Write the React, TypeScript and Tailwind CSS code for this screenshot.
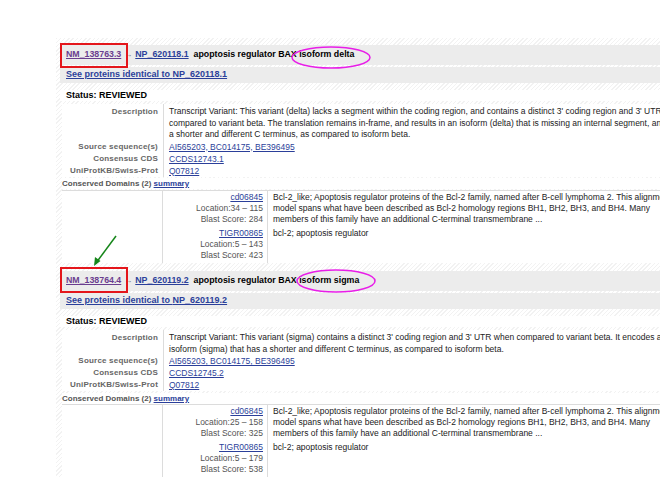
import React from 'react'

type Domain = { id: string; loc: string; score: string; text: string[] }
type Record = {
  nm: string
  np: string
  iso: string
  desc: string[]
  ccds: string
  domains: Domain[]
}

const records: Record[] = [
  {
    nm: 'NM_138763.3',
    np: 'NP_620118.1',
    iso: 'isoform delta',
    desc: [
      "Transcript Variant: This variant (delta) lacks a segment within the coding region, and contains a distinct 3' coding region and 3' UTR, when",
      'compared to variant beta. The translation remains in-frame, and results in an isoform (delta) that is missing an internal segment, and has',
      'a shorter and different C terminus, as compared to isoform beta.',
    ],
    ccds: 'CCDS12743.1',
    domains: [
      {
        id: 'cd06845',
        loc: '34 – 115',
        score: '284',
        text: [
          'Bcl-2_like; Apoptosis regulator proteins of the Bcl-2 family, named after B-cell lymphoma 2. This alignment',
          'model spans what have been described as Bcl-2 homology regions BH1, BH2, BH3, and BH4. Many',
          'members of this family have an additional C-terminal transmembrane ...',
        ],
      },
      { id: 'TIGR00865', loc: '5 – 143', score: '423', text: ['bcl-2; apoptosis regulator'] },
    ],
  },
  {
    nm: 'NM_138764.4',
    np: 'NP_620119.2',
    iso: 'isoform sigma',
    desc: [
      "Transcript Variant: This variant (sigma) contains a distinct 3' coding region and 3' UTR when compared to variant beta. It encodes an",
      'isoform (sigma) that has a shorter and different C terminus, as compared to isoform beta.',
    ],
    ccds: 'CCDS12745.2',
    domains: [
      {
        id: 'cd06845',
        loc: '25 – 158',
        score: '325',
        text: [
          'Bcl-2_like; Apoptosis regulator proteins of the Bcl-2 family, named after B-cell lymphoma 2. This alignment',
          'model spans what have been described as Bcl-2 homology regions BH1, BH2, BH3, and BH4. Many',
          'members of this family have an additional C-terminal transmembrane ...',
        ],
      },
      { id: 'TIGR00865', loc: '5 – 179', score: '538', text: ['bcl-2; apoptosis regulator'] },
    ],
  },
]

const link = 'text-[#2b3f9a] underline'

function Row({ label, children, tall }: { label: string; children: React.ReactNode; tall?: boolean }) {
  return (
    <>
      <div
        className={`text-right pr-[5px] font-bold text-[8px] text-[#666] tracking-[0.2px] ${tall ? 'pt-[2px] leading-[11.5px]' : 'leading-[12px]'}`}
      >
        {label}
      </div>
      <div className={`border-l border-[#dcdcdc] pl-[5px] ${tall ? 'pt-[2px] leading-[11.5px]' : 'leading-[12px]'}`}>
        {children}
      </div>
    </>
  )
}

function Block({ r, first }: { r: Record; first?: boolean }) {
  return (
    <div className={first ? 'pt-[7px]' : 'pt-[8.5px]'}>
      <div className="h-[20px] bg-[#ececec] flex items-center pl-[6px] text-[8.8px] font-bold whitespace-nowrap">
        <span className="text-[#6a3d8f] underline">{r.nm}</span>
        <span className="text-[#7a7a7a] font-normal text-[8px] mx-[3px]">→</span>
        <span className={link}>{r.np}</span>
        <span className="ml-[5px] text-black">apoptosis regulator BAX {r.iso}</span>
      </div>
      <div className="mt-[1.5px] h-[16px] bg-[#ececec] flex items-center pl-[6px] text-[9px] font-bold whitespace-nowrap">
        <span className={link}>See proteins identical to {r.np}</span>
      </div>
      <div className="mt-[7px] mb-[3.5px] bg-white h-[11px] leading-[11px] pl-[6px] text-[9px] font-bold text-black">
        Status: REVIEWED
      </div>

      <div className="ml-[2px] bg-white grid grid-cols-[101px_1fr] text-[8.5px] text-[#222] whitespace-nowrap">
        <Row label="Description" tall>
          {r.desc.map((l) => (
            <div key={l}>{l}</div>
          ))}
        </Row>
        <Row label="Source sequence(s)">
          <span className={link}>AI565203, BC014175, BE396495</span>
        </Row>
        <Row label="Consensus CDS">
          <span className={link}>{r.ccds}</span>
        </Row>
        <Row label="UniProtKB/Swiss-Prot">
          <span className={link}>Q07812</span>
        </Row>
      </div>

      <div className="mt-[1.5px] ml-[2px] bg-white leading-[11px] text-[8px] font-bold text-[#555] whitespace-nowrap">
        Conserved Domains (2) <span className={link}>summary</span>
      </div>

      <div className="mt-[0.5px] ml-[2px] bg-white border-t border-[#dcdcdc] grid grid-cols-[101px_105px_1fr] text-[8.5px] leading-[11px] whitespace-nowrap">
        {r.domains.map((d, i) => (
          <React.Fragment key={d.id}>
            <div className="border-r border-[#dcdcdc]" />
            <div
              className={`border-r border-[#dcdcdc] text-right pr-[4px] text-[#555] ${i === 0 ? 'pt-[1px]' : 'pt-[3px] pb-[2px]'}`}
            >
              <div className={link}>{d.id}</div>
              <div>Location:{d.loc}</div>
              <div>Blast Score: {d.score}</div>
            </div>
            <div className={`pl-[5px] text-[#222] ${i === 0 ? 'pt-[1px]' : 'pt-[3px] pb-[2px]'}`}>
              {d.text.map((l) => (
                <div key={l}>{l}</div>
              ))}
            </div>
          </React.Fragment>
        ))}
      </div>
    </div>
  )
}

export default function App() {
  return (
    <div className="relative w-[660px] h-[480px] overflow-hidden bg-white font-['Liberation_Sans',Arial,sans-serif]">
      <div className="mt-[38px] ml-[56px] pl-[4px] bg-[repeating-linear-gradient(135deg,#f2f2f2_0px,#f2f2f2_1px,#ffffff_1px,#ffffff_3px)]">
        {records.map((r, i) => (
          <Block key={r.nm} r={r} first={i === 0} />
        ))}
      </div>

      {/* annotations drawn over the page */}
      <svg className="absolute inset-0 pointer-events-none" width="660" height="480" viewBox="0 0 660 480">
        <rect x="61" y="44" width="66" height="23" fill="none" stroke="#e4161b" strokeWidth="2" />
        <rect x="61" y="268" width="66" height="24" fill="none" stroke="#e4161b" strokeWidth="2" />
        <ellipse cx="331" cy="57.5" rx="39" ry="10.5" fill="none" stroke="#e81ee8" strokeWidth="1.5" />
        <ellipse cx="336" cy="281" rx="39" ry="11" fill="none" stroke="#e81ee8" strokeWidth="1.5" />
        <line x1="116" y1="236" x2="96" y2="263" stroke="#16861a" strokeWidth="1.5" />
        <path d="M94 266 L95 257 L100.5 261 Z" fill="#16861a" />
      </svg>
    </div>
  )
}
